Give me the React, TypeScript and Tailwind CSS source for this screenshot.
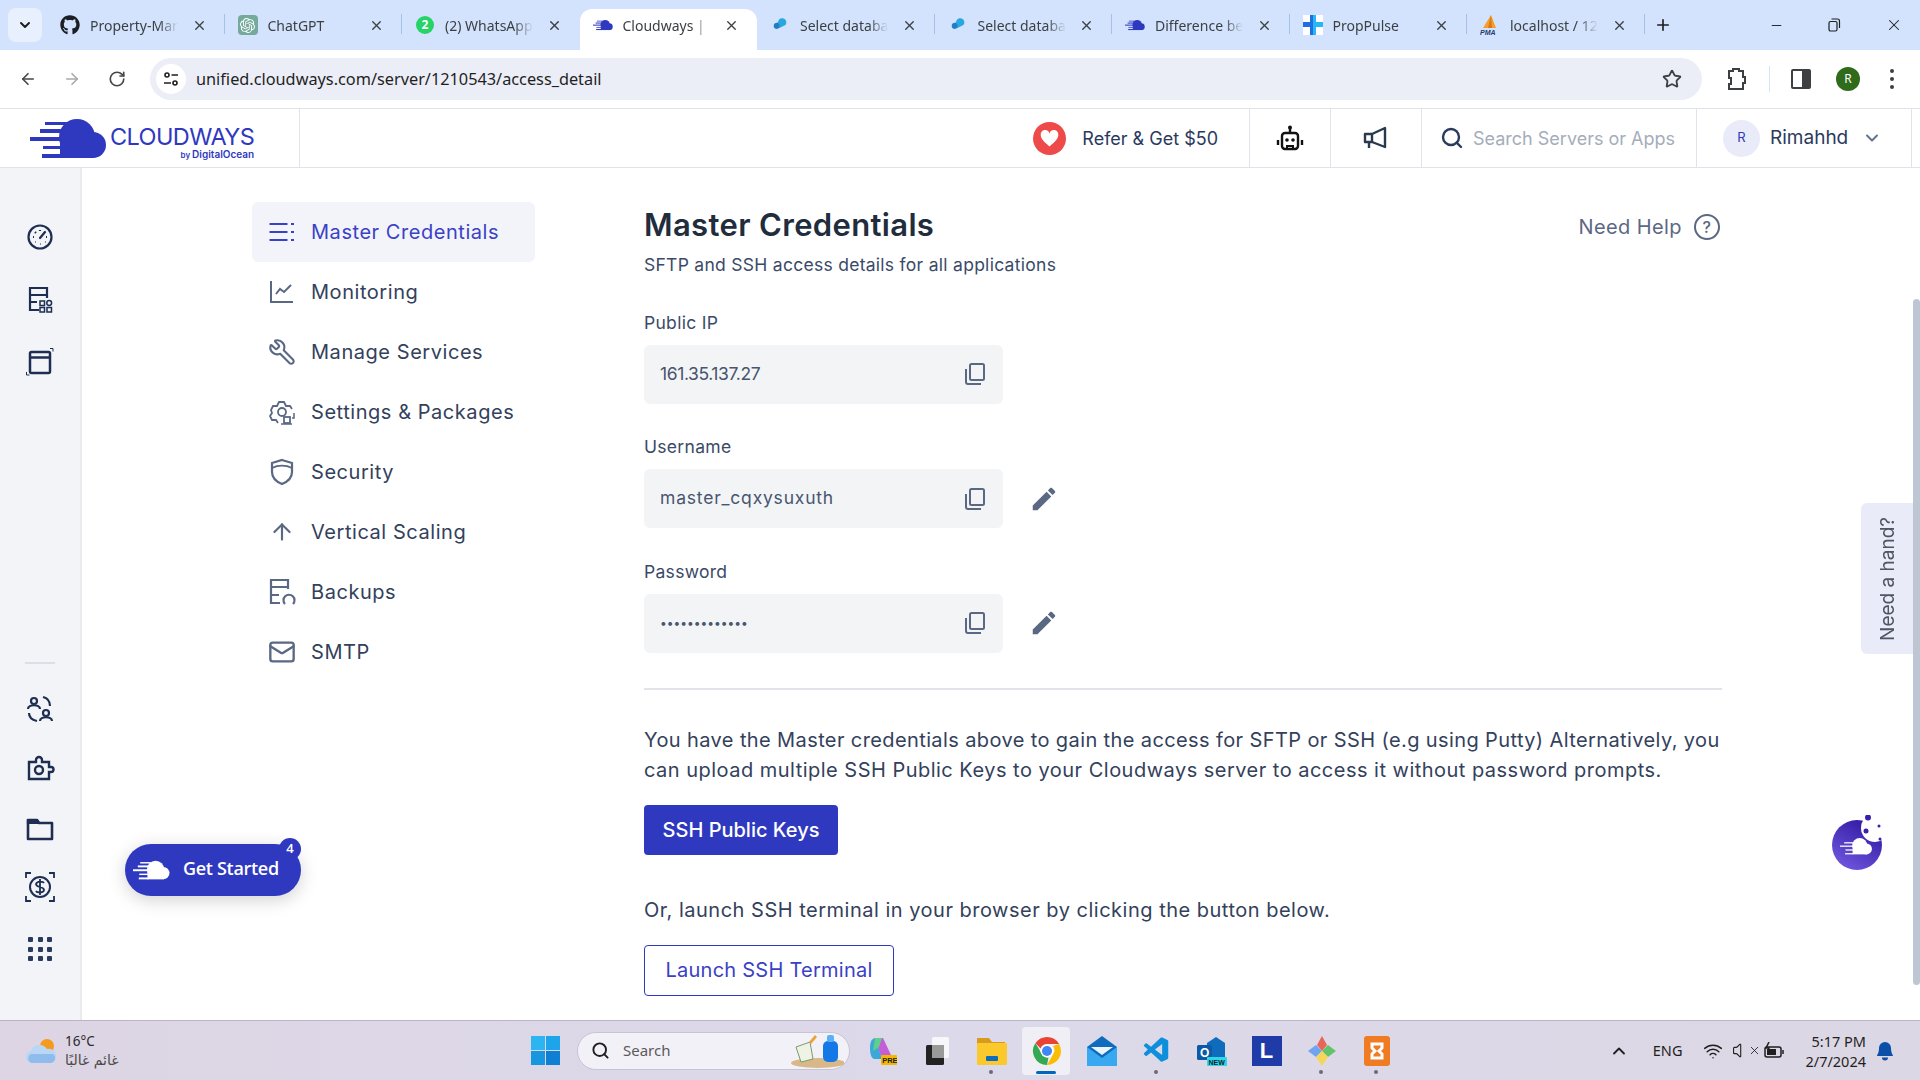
import {
  ArrowLeft,
  ArrowRight,
  ArrowUp,
  ChevronDown,
  ChevronUp,
  Mail,
  Minus,
  Plus,
  RotateCw,
  Search,
  Star,
  Volume,
  Wifi,
  Wrench,
  X,
} from "lucide-react";
import { FaGithub } from "react-icons/fa";
import { SiOpenai } from "react-icons/si";
import { VscVscode } from "react-icons/vsc";

function CloudMark({ className, fill = "#2f39bf" }: { className?: string; fill?: string }) {
  return (
    <svg viewBox="0 0 77 39" className={className} fill={fill}>
      <circle cx="47" cy="18" r="18" />
      <circle cx="63" cy="26" r="13" />
      <rect x="30" y="18" width="34" height="21" />
      <rect x="15" y="3" width="22" height="3" />
      <rect x="10" y="10" width="22" height="4" />
      <rect x="0" y="18" width="32" height="4" />
      <rect x="13" y="27" width="19" height="3" />
      <rect x="12" y="35" width="20" height="4" />
    </svg>
  );
}

function Tab({
  icon,
  title,
  active,
  sep = true,
}: {
  icon: React.ReactNode;
  title: string;
  active?: boolean;
  sep?: boolean;
}) {
  return (
    <div
      className={`relative flex h-[41px] w-[177.5px] shrink-0 items-center pr-[18px] pb-[9px] pl-[13px] ${
        active ? "rounded-t-xl bg-white" : ""
      }`}
    >
      <span className="flex h-5 w-5 shrink-0 items-center justify-center">{icon}</span>
      <span className="ml-[10px] w-[88px] overflow-hidden text-[14px] whitespace-nowrap text-[#3c4043] [mask-image:linear-gradient(to_right,black_78%,transparent)]">
        {title}
      </span>
      <X className="ml-auto h-[15px] w-[15px] shrink-0 text-[#3c4043]" strokeWidth={2.2} />
      {sep && <span className="absolute top-[5px] right-0 h-5 w-px bg-[#a8c0e8]" />}
    </div>
  );
}

function DbFavicon() {
  return (
    <svg viewBox="0 0 20 20" className="h-[18px] w-[18px]">
      <path d="M9 4c3-3 8-1 8 3 0 1 0 2-1 3l-6 3c-3 1-5-1-4-3z" fill="#2aa7df" />
      <path d="M3 11c0-3 3-4 5-3s2 5 0 6-5 0-5-3z" fill="#1f7fc4" />
    </svg>
  );
}

function TabBar() {
  return (
    <div className="flex h-[50px] shrink-0 items-end bg-[#d3e3fd] pl-[8px]">
      <div className="mb-[8px] flex h-[34px] w-[34px] shrink-0 items-center justify-center rounded-lg bg-[#e9f0fd]">
        <ChevronDown className="h-4 w-4 text-[#1f1f1f]" strokeWidth={3} />
      </div>
      <div className="ml-[5px] flex">
        <Tab icon={<FaGithub className="h-5 w-5 text-[#1b1f23]" />} title="Property-Mar" />
        <Tab
          icon={
            <span className="flex h-5 w-5 items-center justify-center rounded-[4px] bg-[#74aa9c]">
              <SiOpenai className="h-[15px] w-[15px] text-white" />
            </span>
          }
          title="ChatGPT"
        />
        <Tab
          icon={
            <span className="flex h-[18px] w-[18px] items-center justify-center rounded-full bg-[#25d366] text-[12px] font-bold text-white">
              2
            </span>
          }
          title="(2) WhatsApp"
          sep={false}
        />
        <Tab icon={<CloudMark className="h-[12px] w-[20px]" />} title="Cloudways |" active sep={false} />
        <Tab icon={<DbFavicon />} title="Select databa" />
        <Tab icon={<DbFavicon />} title="Select databa" />
        <Tab icon={<CloudMark className="h-[12px] w-[20px]" />} title="Difference be" />
        <Tab
          icon={
            <svg viewBox="0 0 20 20" className="h-5 w-5">
              <rect width="20" height="20" fill="#fff" />
              <path d="M10 0H7v7H0v5h7v8h3z" fill="#1e6fe0" />
              <path d="M10 0h3v7h7v5h-7v8h-3z" fill="#29b6f6" />
            </svg>
          }
          title="PropPulse"
        />
        <Tab
          icon={
            <svg viewBox="0 0 20 20" className="h-5 w-5">
              <path d="M11 0l5 13H3z" fill="#f59e2c" />
              <path d="M11 0l1 13H8z" fill="#d9791a" />
              <text x="0" y="19.5" fontSize="7" fontWeight="700" fontStyle="italic" fill="#1e3a6e" fontFamily="Liberation Sans">
                PMA
              </text>
            </svg>
          }
          title="localhost / 12"
        />
      </div>
      <Plus className="mb-[16px] ml-[9px] h-[18px] w-[18px] text-[#1f1f1f]" strokeWidth={2.2} />
      <div className="mb-[16px] ml-[97px] flex w-[134px] items-center justify-between">
        <Minus className="h-[15px] w-[15px] text-[#1f1f1f]" strokeWidth={1.5} />
        <svg viewBox="0 0 14 14" className="h-[14px] w-[14px]" fill="none" stroke="#1f1f1f" strokeWidth="1.2">
          <rect x="2" y="3.5" width="8" height="9.5" rx="1.5" />
          <path d="M4.5 1h6a2 2 0 0 1 2 2v7" />
        </svg>
        <X className="h-[18px] w-[18px] text-[#1f1f1f]" strokeWidth={1.4} />
      </div>
    </div>
  );
}

function Toolbar() {
  return (
    <div className="flex h-[58px] shrink-0 items-center rounded-t-lg bg-white">
      <ArrowLeft className="ml-[19px] h-[18px] w-[18px] text-[#474747]" strokeWidth={2.2} />
      <ArrowRight className="ml-[26px] h-[18px] w-[18px] text-[#a7a9ab]" strokeWidth={2.2} />
      <RotateCw className="ml-[27px] h-[18px] w-[18px] text-[#474747]" strokeWidth={2.2} />
      <div className="ml-[24px] flex h-[42px] w-[1552px] items-center rounded-full bg-[#ebeef7]">
        <span className="ml-[6px] flex h-[30px] w-[30px] items-center justify-center rounded-full bg-white">
          <svg viewBox="0 0 16 16" className="h-4 w-4" fill="none" stroke="#1f1f1f" strokeWidth="1.6">
            <circle cx="4" cy="4" r="2" />
            <path d="M8.5 4H15M1 12h7" />
            <circle cx="12" cy="12" r="2" />
          </svg>
        </span>
        <span className="ml-[10px] pt-[1px] text-[16.3px] text-[#1f1f1f]">unified.cloudways.com/server/1210543/access_detail</span>
        <Star className="mr-[20px] ml-auto h-[20px] w-[20px] text-[#3c4043]" strokeWidth={2.2} />
      </div>
      <svg viewBox="0 0 22 24" className="ml-[23px] h-[24px] w-[22px]" fill="none" stroke="#3c4043" strokeWidth="2">
        <path d="M4 4h4V2h6v2h4v6h2v6h-2v6H4v-5h2v-6H4z" />
      </svg>
      <span className="ml-[22px] h-[26px] w-px bg-[#d3e3fd]" />
      <span className="ml-[21px] flex h-[20px] w-[20px] rounded-[2px] border-2 border-[#3c4043]">
        <span className="ml-auto h-full w-[7px] bg-[#3c4043]" />
      </span>
      <span className="ml-[25px] flex h-[24px] w-[24px] items-center justify-center rounded-full bg-[#2f6b1a] text-[12px] text-white">
        R
      </span>
      <span className="ml-[30px] flex flex-col gap-[4px]">
        <span className="h-[4px] w-[4px] rounded-full bg-[#3c4043]" />
        <span className="h-[4px] w-[4px] rounded-full bg-[#3c4043]" />
        <span className="h-[4px] w-[4px] rounded-full bg-[#3c4043]" />
      </span>
    </div>
  );
}

function AppHeader() {
  return (
    <header className="flex h-[60px] shrink-0 items-stretch border-y border-[#e1e3ea] bg-white pr-[8px] font-['Inter',sans-serif]">
      <div className="flex w-[300px] items-center border-r border-[#e1e3ea] pl-[30px]">
        <CloudMark className="h-[39px] w-[77px]" />
        <div className="mt-[10px] ml-[3px] flex flex-col items-end">
          <span className="text-[23.5px] leading-[24px] tracking-[-0.6px] text-[#2f39bf]">CLOUDWAYS</span>
          <span className="text-[10px] leading-[11px] font-semibold text-[#2f39bf]">
            <span className="text-[8px]">by </span>DigitalOcean
          </span>
        </div>
      </div>
      <div className="flex flex-1 items-center justify-end border-r border-[#e1e3ea] pr-[31px]">
        <span className="flex h-[33px] w-[33px] items-center justify-center rounded-full bg-[#ef4a4a]">
          <svg viewBox="0 0 24 24" className="h-[21px] w-[21px]" fill="#fff">
            <path d="M12 21C5 15 2 12 2 8a5 5 0 0 1 10-1.500A5 5 0 0 1 22 8c0 4-3 7-10 13z" />
          </svg>
        </span>
        <span className="ml-[16px] text-[18px] text-[#2a3a5e]">Refer &amp; Get $50</span>
      </div>
      <div className="flex w-[81px] items-center justify-center border-r border-[#e1e3ea]">
        <svg viewBox="0 0 28 28" className="h-[28px] w-[28px]" fill="none" stroke="#111" strokeWidth="2.4">
          <circle cx="14" cy="3.500" r="2" fill="#111" stroke="none" />
          <path d="M14 4v5" />
          <rect x="6" y="9" width="16" height="16" rx="3" />
          <path d="M2 16v5M26 16v5" />
          <path d="M11 25v-3h6v3" strokeWidth="2" />
          <circle cx="11" cy="16" r="1.800" fill="#111" stroke="none" />
          <circle cx="17" cy="16" r="1.800" fill="#111" stroke="none" />
        </svg>
      </div>
      <div className="flex w-[91px] items-center justify-center border-r border-[#e1e3ea]">
        <svg viewBox="0 0 26 26" className="h-[26px] w-[26px]" fill="none" stroke="#2a3a4e" strokeWidth="2.4" strokeLinejoin="round">
          <path d="M2 9h7l13-6v19L9 17H2z" />
          <path d="M9 9v8M6 17v6" />
        </svg>
      </div>
      <div className="flex w-[275px] items-center border-r border-[#e1e3ea] pl-[18px]">
        <Search className="h-[24px] w-[24px] text-[#2a3a5e]" strokeWidth={2.4} />
        <span className="ml-[9px] text-[18px] text-[#a5adbb]">Search Servers or Apps</span>
      </div>
      <div className="flex w-[215px] items-center border-r border-[#e1e3ea] pl-[26px]">
        <span className="flex h-[37px] w-[37px] items-center justify-center rounded-full bg-[#e9ebf8] text-[13px] text-[#2f39bf]">
          R
        </span>
        <span className="ml-[10px] text-[19px] text-[#2a3a5e]">Rimahhd</span>
        <ChevronDown className="ml-[14px] h-[20px] w-[20px] text-[#64748b]" strokeWidth={2.4} />
      </div>
    </header>
  );
}

function RailIcon({ children, className }: { children: React.ReactNode; className?: string }) {
  return (
    <div className={`flex justify-center ${className ?? ""}`}>
      <svg viewBox="0 0 30 30" className="h-[30px] w-[30px]" fill="none" stroke="#1e2e52" strokeWidth="2.200">
        {children}
      </svg>
    </div>
  );
}

function Rail() {
  return (
    <aside className="flex w-[82px] shrink-0 flex-col items-center border-r-2 border-[#e9ebef] bg-[#f3f4f8] pt-[54px]">
      <RailIcon>
        <circle cx="15" cy="15" r="11.500" />
        <path d="M15 16l5-6" strokeLinecap="round" />
        <path d="M8 15h1M15 8v1M10 10l1 1M21 15h1M10 20h.5M20 20h.5M15 22h.5" />
      </RailIcon>
      <RailIcon className="mt-[32px]">
        <path d="M14 26H5V4h17v10M5 11h17M5 18h7" />
        <rect x="15" y="17" width="4.500" height="4.500" strokeWidth="1.500" />
        <rect x="15" y="23.500" width="4.500" height="4.500" strokeWidth="1.500" />
        <rect x="22" y="23.500" width="4.500" height="4.500" strokeWidth="1.500" />
        <circle cx="24.200" cy="19" r="2.400" strokeWidth="1.500" />
      </RailIcon>
      <RailIcon className="mt-[33px]">
        <rect x="5" y="5" width="20" height="21" rx="1.500" strokeWidth="2.500" />
        <path d="M5 10.500h20" strokeWidth="2.500" />
        <path d="M25 1.500h3v3M1.500 25v3h3" strokeWidth="1" />
      </RailIcon>
      <span className="mt-[285px] h-[2px] w-[30px] bg-[#dcdfe6]" />
      <RailIcon className="mt-[30px]">
        <circle cx="9" cy="7" r="3" />
        <path d="M3 15c0-5 12-5 12 0" />
        <circle cx="21" cy="19" r="3" />
        <path d="M15 27c0-5 12-5 12 0" />
        <path d="M18 3c4 1 7 4 7 9M4 19c0 4 3 7 8 8" />
      </RailIcon>
      <RailIcon className="mt-[29px]">
        <path d="M4 9h7V7a3 3 0 0 1 6 0v2h7v5h2a2 2 0 0 1 0 5h-2v7H4z" strokeWidth="2.400" />
        <circle cx="14" cy="17" r="4" strokeWidth="2.400" />
      </RailIcon>
      <RailIcon className="mt-[31px]">
        <path d="M3 6h9l2 3h13v16H3z" strokeWidth="2.600" strokeLinejoin="round" />
        <path d="M3 6h9l2 3H3z" fill="#1e2e52" />
      </RailIcon>
      <RailIcon className="mt-[28px]">
        <circle cx="15" cy="15" r="10" strokeWidth="2" />
        <path d="M19 11c-1-2-7-2-8 1 0 4 8 2 8 6 0 3-7 3-8 1M15 7v16" strokeWidth="1.800" />
        <path d="M1 6V1h5M24 1h5v5M1 24v5h5M29 24v5h-5" strokeWidth="1.800" />
      </RailIcon>
      <div className="mt-[35px] grid grid-cols-3 gap-[4.500px]">
        {Array.from({ length: 9 }).map((_, i) => (
          <span key={i} className="h-[5px] w-[5px] rounded-[1px] bg-[#2a3a5e]" />
        ))}
      </div>
    </aside>
  );
}

function NavItem({ icon, label, active }: { icon: React.ReactNode; label: string; active?: boolean }) {
  return (
    <div
      className={`flex h-[60px] items-center rounded-md pl-[16px] text-[20px] ${
        active ? "bg-[#f3f4f9] text-[#3a41c6]" : "text-[#33415c]"
      }`}
    >
      <span className="flex w-[28px] justify-center">{icon}</span>
      <span className="ml-[15px] tracking-[0.55px]">{label}</span>
    </div>
  );
}

const navStroke = "#5b6883";

function NavList() {
  const svg = (body: React.ReactNode) => (
    <svg viewBox="0 0 28 28" className="h-[28px] w-[28px]" fill="none" stroke={navStroke} strokeWidth="2">
      {body}
    </svg>
  );
  return (
    <nav className="mt-[34px] w-[283px] shrink-0">
      <NavItem
        active
        label="Master Credentials"
        icon={
          <svg viewBox="0 0 28 28" className="h-[28px] w-[28px]" fill="none" stroke="#3a41c6" strokeWidth="2.200">
            <path d="M1.500 6h18M1.500 14h18M1.500 22h18" />
            <path d="M24.500 5v2M24.500 13v2M24.500 21v2" strokeWidth="3" />
          </svg>
        }
      />
      <NavItem
        label="Monitoring"
        icon={svg(
          <>
            <path d="M3 3v21h22" />
            <path d="M8 16l4-5 4 3 7-7" />
          </>,
        )}
      />
      <NavItem label="Manage Services" icon={<Wrench className="h-[28px] w-[28px] -scale-x-100" color={navStroke} strokeWidth={1.800} />} />
      <NavItem
        label="Settings & Packages"
        icon={svg(
          <>
            <path d="M10 25l-2-3-4 0-2-4 2-3-1-3 2-4 4 0 2-4h5l2 4 4 0 2 3" strokeWidth="1.800" />
            <circle cx="14" cy="14" r="4" strokeWidth="1.800" />
            <rect x="16" y="19" width="6" height="6" strokeWidth="1.800" />
            <path d="M26 15v5h-2M13 26h11" strokeWidth="1.500" />
          </>,
        )}
      />
      <NavItem
        label="Security"
        icon={svg(
          <>
            <path d="M14 2l10 3v9c0 6-5 10-10 12C9 24 4 20 4 14V5z" strokeWidth="2.200" />
            <path d="M4 10c6-3 14-3 20 0" strokeWidth="1.800" />
          </>,
        )}
      />
      <NavItem label="Vertical Scaling" icon={<ArrowUp className="h-[26px] w-[26px]" color={navStroke} strokeWidth={2} />} />
      <NavItem
        label="Backups"
        icon={svg(
          <>
            <path d="M12 25H3V2h17v9M3 9h17M3 17h8" strokeWidth="2.200" />
            <path d="M17 26a5.500 5.500 0 1 1 8 0" strokeWidth="2.200" />
          </>,
        )}
      />
      <NavItem label="SMTP" icon={<Mail className="h-[28px] w-[28px]" color={navStroke} strokeWidth={2} />} />
    </nav>
  );
}

function CopyIcon() {
  return (
    <svg viewBox="0 0 22 24" className="ml-auto h-[24px] w-[22px]" fill="none" stroke="#5b6883" strokeWidth="2">
      <rect x="6" y="2" width="14" height="16" rx="1.500" />
      <path d="M2 7v13a2 2 0 0 0 2 2h13" />
    </svg>
  );
}

function PencilIcon() {
  return (
    <svg viewBox="0 0 24 24" className="ml-[26px] h-[30px] w-[30px]" fill="#5b6883">
      <path d="M3 17.250V21h3.750L17.810 9.940l-3.750-3.750L3 17.250zM20.710 7.040c.39-.39.39-1.020 0-1.410l-2.340-2.340c-.39-.39-1.020-.39-1.410 0l-1.830 1.830 3.750 3.750 1.830-1.830z" />
    </svg>
  );
}

function Field({
  label,
  value,
  editable,
  top,
  valueClass,
}: {
  label: string;
  value: string;
  editable?: boolean;
  top: string;
  valueClass: string;
}) {
  return (
    <div className={top}>
      <div className="text-[17.500px] leading-[24px] tracking-[0.3px] text-[#3a4a68]">{label}</div>
      <div className="mt-[10px] flex items-center">
        <div className="flex h-[59px] w-[359px] items-center rounded-md bg-[#f3f4f6] pr-[17px] pl-[16px] text-[#47556f]">
          <span className={valueClass}>{value}</span>
          <CopyIcon />
        </div>
        {editable && <PencilIcon />}
      </div>
    </div>
  );
}

function Credentials() {
  return (
    <main className="ml-[109px] w-[1078px] pt-[38px] text-[#33415c]">
      <div className="flex items-start justify-between">
        <div>
          <h1 className="text-[31px] leading-[38px] font-semibold tracking-[0.35px] text-[#1f2d3d]">Master Credentials</h1>
          <p className="mt-[7.500px] text-[17.500px] leading-[26px] tracking-[0.28px] text-[#3a4a68]">
            SFTP and SSH access details for all applications
          </p>
        </div>
        <div className="mt-[6px] mr-[2px] flex items-center gap-[12px] text-[20px] tracking-[0.4px] text-[#5b6883]">
          Need Help
          <span className="flex h-[26px] w-[26px] items-center justify-center rounded-full border-2 border-[#5b6883] text-[16px] font-medium">
            ?
          </span>
        </div>
      </div>
      <Field label="Public IP" value="161.35.137.27" top="mt-[33px]" valueClass="text-[17.500px] tracking-[-0.4px]" />
      <Field label="Username" value="master_cqxysuxuth" editable top="mt-[31.500px]" valueClass="text-[17.500px] tracking-[0.8px]" />
      <Field label="Password" value="•••••••••••••" editable top="mt-[31.500px]" valueClass="text-[12px]" />
      <hr className="mt-[35px] border-t-2 border-[#e2e3e8]" />
      <p className="mt-[35px] text-[20px] leading-[30px]">
        <span className="block tracking-[0.39px] whitespace-nowrap">
          You have the Master credentials above to gain the access for SFTP or SSH (e.g using Putty) Alternatively, you
        </span>
        <span className="block tracking-[0.48px] whitespace-nowrap">
          can upload multiple SSH Public Keys to your Cloudways server to access it without password prompts.
        </span>
      </p>
      <button className="mt-[20px] flex h-[50px] w-[194px] items-center justify-center rounded bg-[#2f39bf] text-[20px] font-medium text-white">
        SSH Public Keys
      </button>
      <p className="mt-[40px] text-[20px] leading-[30px] tracking-[0.5px]">
        Or, launch SSH terminal in your browser by clicking the button below.
      </p>
      <button className="mt-[20px] flex h-[51px] w-[250px] items-center justify-center rounded border border-[#2f39bf] text-[20px] tracking-[0.25px] text-[#3a41c6]">
        Launch SSH Terminal
      </button>
    </main>
  );
}

function Overlays() {
  return (
    <>
      <div className="absolute top-[676px] left-[125px] flex h-[52px] w-[176px] items-center rounded-[26px] bg-[#2f39bf] pl-[8px] font-['Open_Sans',sans-serif] shadow-[0_4px_18px_rgba(0,0,0,0.18)]">
        <CloudMark className="h-[20px] w-[37px]" fill="#fff" />
        <span className="-mt-[3px] ml-[13px] text-[18px] font-semibold tracking-[-0.3px] text-white">Get Started</span>
        <span className="absolute -top-[6px] right-0 flex h-[22px] w-[22px] items-center justify-center rounded-full bg-[#2f39bf] text-[13px] font-semibold text-white">
          4
        </span>
      </div>
      <div className="absolute top-[335px] right-[7px] flex h-[151px] w-[52px] items-center justify-center rounded-l-md bg-[#e9ebf8]">
        <span className="ml-[2px] rotate-180 text-[19px] text-[#4f5563] [writing-mode:vertical-rl]">Need a hand?</span>
      </div>
      <svg viewBox="0 0 52 56" className="absolute top-[647px] left-[1831px] h-[56px] w-[52px]">
        <defs>
          <linearGradient id="botFill" x1="0.2" y1="1" x2="0.8" y2="0">
            <stop offset="0" stopColor="#7258e0" />
            <stop offset="1" stopColor="#2d16a0" />
          </linearGradient>
        </defs>
        <circle cx="26" cy="30" r="25" fill="url(#botFill)" />
        <circle cx="44" cy="13" r="14" fill="#fff" />
        <circle cx="37" cy="2.500" r="3" fill="#3a1fb0" />
        <circle cx="35" cy="16" r="2.500" fill="#3a1fb0" />
        <circle cx="48" cy="11" r="1.500" fill="#3a1fb0" />
        <circle cx="49" cy="24" r="1.500" fill="#3a1fb0" />
        <g transform="translate(9 23) scale(0.42)">
          <CloudMarkShapes />
        </g>
      </svg>
      <div className="absolute top-[131px] right-0 h-[686px] w-[7px] rounded-full bg-[#bfc6d3]" />
    </>
  );
}

function CloudMarkShapes() {
  return (
    <g fill="#fff">
      <circle cx="47" cy="18" r="18" />
      <circle cx="63" cy="26" r="13" />
      <rect x="30" y="18" width="34" height="21" />
      <rect x="10" y="10" width="22" height="3" />
      <rect x="0" y="18" width="32" height="3" />
      <rect x="13" y="27" width="19" height="3" />
      <rect x="12" y="36" width="20" height="3" />
    </g>
  );
}

function TaskIcon({ children, active, dot }: { children: React.ReactNode; active?: boolean; dot?: boolean }) {
  return (
    <div className="relative flex h-[48px] w-[55px] items-center justify-center">
      {active && <span className="absolute inset-y-0 left-[3px] w-[48px] rounded bg-[#f0eff6]" />}
      <span className="relative flex h-[30px] w-[30px] items-center justify-center">{children}</span>
      {active && <span className="absolute bottom-[1px] left-[17px] h-[3px] w-[20px] rounded-full bg-[#0067c0]" />}
      {dot && <span className="absolute bottom-[1px] left-[25px] h-[4px] w-[4px] rounded-full bg-[#6b6b75]" />}
    </div>
  );
}

function Taskbar() {
  return (
    <footer className="flex h-[60px] shrink-0 items-center border-t border-[#b9b5c4] bg-gradient-to-r from-[#ddd5e4] via-[#dcd9ea] to-[#dcd7e4] font-['Noto_Sans',sans-serif]">
      <div className="flex w-[525px] shrink-0 items-center pl-[25px]">
        <svg viewBox="0 0 32 26" className="h-[26px] w-[32px]">
          <circle cx="22" cy="8" r="7" fill="#f59a1c" />
          <path d="M8 25a6 6 0 0 1-2-12 9 9 0 0 1 16-2 6 6 0 0 1 4 14z" fill="#b9d6f5" />
          <path d="M6 25a5 5 0 0 1 0-9h22a5 5 0 0 1-2 9z" fill="#8fbcec" />
        </svg>
        <div className="ml-[8px] flex flex-col text-[#2b2b2b]">
          <span className="text-[13.500px] leading-[19px]">16°C</span>
          <span className="font-['DejaVu_Sans',sans-serif] text-[14px] leading-[19px] text-[#4a4a4a]">غائم غالبًا</span>
        </div>
      </div>
      <div className="flex w-[40px] shrink-0 justify-center">
        <div className="grid h-[29px] w-[29px] grid-cols-2 gap-[1px]">
          <span className="bg-[#2cb5f0]" />
          <span className="bg-[#1ea4ea]" />
          <span className="bg-[#1896e0]" />
          <span className="bg-[#0f7fd4]" />
        </div>
      </div>
      <div className="ml-[12px] flex h-[38px] w-[273px] shrink-0 items-center rounded-full border border-[#c9c4d4] bg-[#f3f1f8] pl-[13px]">
        <Search className="h-[19px] w-[19px] text-[#1f1f1f]" strokeWidth={2.4} />
        <span className="ml-[13px] text-[15px] text-[#5a5a5a]">Search</span>
        <svg viewBox="0 0 56 34" className="mr-[5px] ml-auto h-[34px] w-[56px]">
          <ellipse cx="30" cy="29" rx="27" ry="5" fill="#d8b888" />
          <path d="M8 13l14-5 3 17-12 3z" fill="#eef3e6" stroke="#7a9a6a" />
          <path d="M21 8l6-7 2 2-6 7z" fill="#e8a33a" />
          <rect x="35" y="7" width="15" height="21" rx="5" fill="#1478e6" />
          <rect x="39" y="1" width="7" height="7" rx="2" fill="#5ab0f5" />
        </svg>
      </div>
      <div className="ml-[4px] flex shrink-0 items-center">
        <TaskIcon>
          <svg viewBox="0 0 30 30" className="h-[30px] w-[30px]">
            <path d="M8 2h8l8 17c1 3-2 5-5 5h-4z" fill="#c35ed6" />
            <path d="M8 2C4 3 3 7 3 12s1 10 4 11h8z" fill="#3aa8d8" />
            <path d="M8 2h7l-3 9-6 4z" fill="#5ed08a" />
            <rect x="14" y="19" width="16" height="10" rx="1" fill="#f5b800" />
            <text x="15.200" y="27" fontSize="7.500" fontWeight="700" fill="#222" fontFamily="Liberation Sans">
              PRE
            </text>
          </svg>
        </TaskIcon>
        <TaskIcon>
          <svg viewBox="0 0 30 30" className="h-[30px] w-[30px]">
            <rect x="10" y="1" width="17" height="21" rx="1.500" fill="#f7f7f9" />
            <rect x="4" y="9" width="18" height="20" rx="1.500" fill="#222" />
            <rect x="10" y="9" width="12" height="13" fill="#9a9a9a" />
          </svg>
        </TaskIcon>
        <TaskIcon dot>
          <svg viewBox="0 0 30 30" className="h-[30px] w-[30px]">
            <path d="M0 2h12l3 4h13v5H0z" fill="#d99b1c" />
            <rect y="7" width="30" height="22" rx="1" fill="#fbc92b" />
            <rect x="9" y="20" width="12" height="5" rx="1" fill="#0f6cbd" />
          </svg>
        </TaskIcon>
        <TaskIcon active>
          <svg viewBox="0 0 30 30" className="h-[32px] w-[32px]">
            <path d="M15 1a14 14 0 0 1 12.100 7H15a7 7 0 0 0-6.500 4.500L3.500 7A14 14 0 0 1 15 1z" fill="#ea4335" />
            <path d="M27.100 8A14 14 0 0 1 15 29l6-10.500A7 7 0 0 0 21 10z" fill="#fbbc04" />
            <path d="M15 29A14 14 0 0 1 3.500 7l6 10.500a7 7 0 0 0 7 4z" fill="#34a853" />
            <circle cx="15" cy="15" r="6.500" fill="#fff" />
            <circle cx="15" cy="15" r="5" fill="#4285f4" />
          </svg>
        </TaskIcon>
        <TaskIcon>
          <svg viewBox="0 0 30 30" className="h-[30px] w-[30px]">
            <path d="M15 0L0 11v19h30V11z" fill="#0f6cbd" />
            <path d="M0 11l15 11 15-11v19H0z" fill="#38a8f0" />
            <path d="M4 11h22l-11 8z" fill="#eaf4fb" />
          </svg>
        </TaskIcon>
        <TaskIcon dot>
          <VscVscode className="h-[31px] w-[31px] text-[#0d8fdc]" />
        </TaskIcon>
        <TaskIcon>
          <svg viewBox="0 0 30 30" className="h-[30px] w-[30px]">
            <path d="M10 7l9-6 9 6v16H10z" fill="#0f6cbd" />
            <rect x="0" y="9" width="15" height="15" rx="1.500" fill="#0a5aa8" />
            <text x="3" y="21" fontSize="12" fontWeight="700" fill="#fff" fontFamily="Liberation Sans">
              O
            </text>
            <rect x="10" y="21" width="20" height="9" rx="1" fill="#2fd6e8" />
            <text x="11.500" y="28.500" fontSize="7" fontWeight="700" fill="#123" fontFamily="Liberation Sans">
              NEW
            </text>
          </svg>
        </TaskIcon>
        <TaskIcon>
          <span className="flex h-[30px] w-[30px] items-center justify-center bg-[#1e3ba8] font-['Liberation_Sans',sans-serif] text-[22px] font-bold text-white">
            L
          </span>
        </TaskIcon>
        <TaskIcon dot>
          <svg viewBox="0 0 30 30" className="h-[30px] w-[30px]">
            <path d="M15 0l5 9-5 6-5-6z" fill="#e8655a" />
            <path d="M9 9l6 6-6 6-8-6z" fill="#6ea5f0" />
            <path d="M21 9l8 6-8 6-6-6z" fill="#62c46a" />
            <path d="M15 15l6 6-6 9-6-9z" fill="#f5d65a" />
          </svg>
        </TaskIcon>
        <TaskIcon dot>
          <span className="flex h-[30px] w-[26px] items-center justify-center rounded-[3px] bg-[#ef7b22]">
            <svg viewBox="0 0 20 20" className="h-[20px] w-[20px]" fill="none" stroke="#fff" strokeWidth="3">
              <path d="M5 3h10v4l-3 3 3 3v4H5v-4l3-3-3-3z" />
            </svg>
          </span>
        </TaskIcon>
      </div>
      <div className="ml-auto flex items-center pr-[25px] text-[#1f1f1f]">
        <ChevronUp className="h-[20px] w-[20px]" strokeWidth={2.2} />
        <span className="ml-[24px] text-[14.500px]">ENG</span>
        <Wifi className="ml-[21px] h-[20px] w-[20px]" strokeWidth={1.800} />
        <span className="ml-[9px] flex items-center">
          <Volume className="h-[19px] w-[19px]" strokeWidth={1.400} />
          <X className="-ml-[3px] h-[13px] w-[13px]" strokeWidth={1.600} />
        </span>
        <svg viewBox="0 0 22 18" className="ml-[2px] h-[18px] w-[22px]" fill="none" stroke="#1f1f1f" strokeWidth="1.500">
          <rect x="2" y="5" width="16" height="10" rx="2" />
          <rect x="4" y="7" width="9" height="6" fill="#1f1f1f" stroke="none" />
          <path d="M20 8v4" />
          <path d="M6 0L3 6h3L5 10" />
        </svg>
        <div className="ml-[20px] flex flex-col items-end text-[14.500px] leading-[20px]">
          <span>5:17 PM</span>
          <span>2/7/2024</span>
        </div>
        <svg viewBox="0 0 20 20" className="ml-[9px] h-[20px] w-[20px]" fill="#0b4fa8">
          <path d="M10 1a6 6 0 0 0-6 6c0 5-2 7-2 8h16c0-1-2-3-2-8a6 6 0 0 0-6-6z" />
          <path d="M7 16.500a3 3 0 0 0 6 0z" />
        </svg>
      </div>
    </footer>
  );
}

export default function App() {
  return (
    <div className="flex h-screen w-full flex-col overflow-hidden bg-white font-['Noto_Sans',sans-serif]">
      <TabBar />
      <Toolbar />
      <AppHeader />
      <div className="relative flex min-h-0 flex-1 overflow-hidden font-['Inter',sans-serif]">
        <Rail />
        <div className="ml-[170px] flex">
          <NavList />
          <Credentials />
        </div>
        <Overlays />
      </div>
      <Taskbar />
    </div>
  );
}
